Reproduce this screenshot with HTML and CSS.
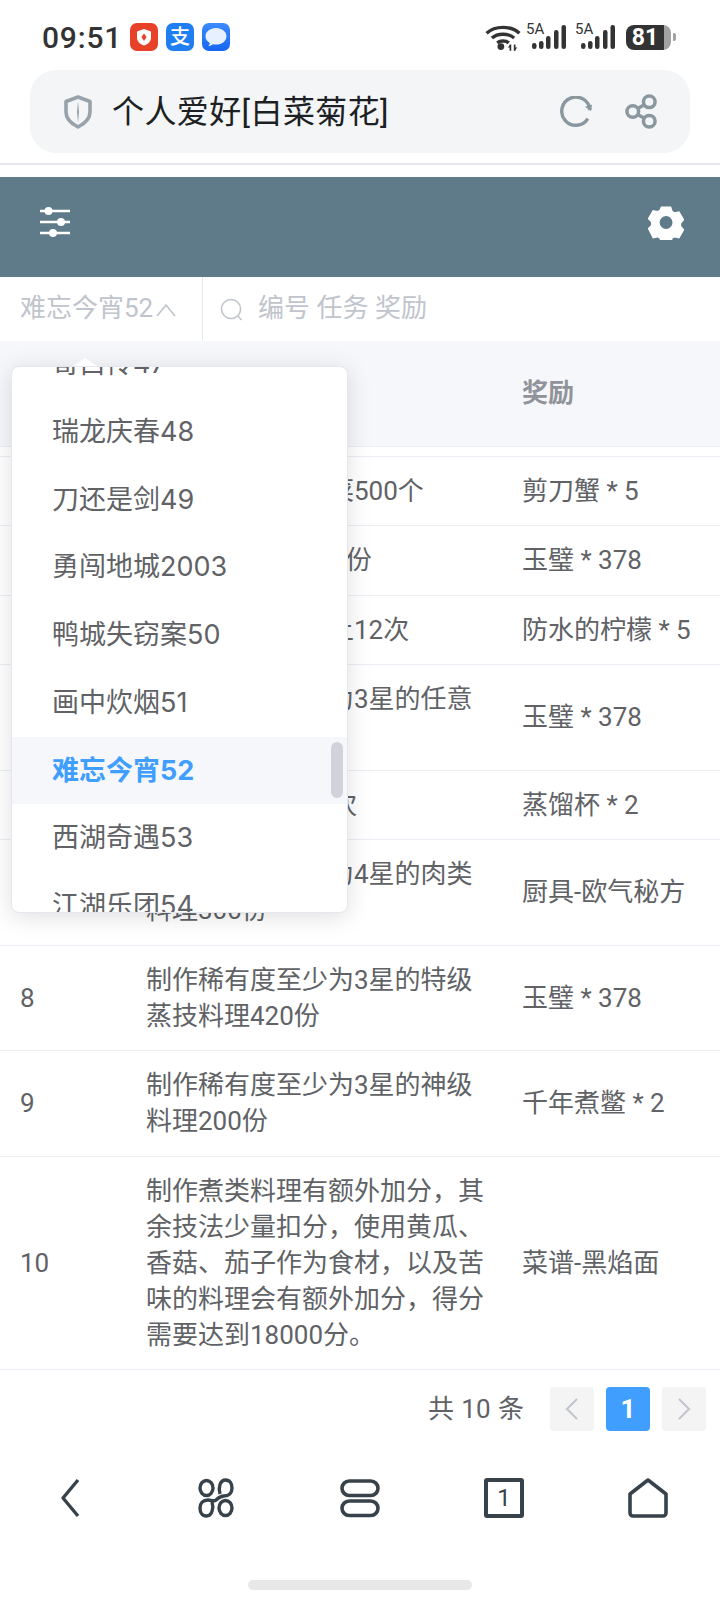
FILE: index.html
```html
<!DOCTYPE html>
<html lang="zh-CN">
<head>
<meta charset="utf-8">
<title>个人爱好[白菜菊花]</title>
<link rel="stylesheet" href="styles.css">
</head>
<body>
<div class="phone">
  <div class="status">
    <span class="time">09:51</span>
    <span class="app app-red">
      <svg viewBox="0 0 28 28" width="28" height="28"><path d="M14 6l7 2.400v6c0 4-3 6.600-7 8-4-1.400-7-4-7-8v-6z" fill="#fff"/><path d="M14 10.500l2.600 3.600-2.600 3.900-2.600-3.900z" fill="#e8412a"/></svg>
    </span>
    <span class="app app-blue">支</span>
    <span class="app app-msg">
      <svg viewBox="0 0 28 28" width="28" height="28"><path d="M14 5c6 0 10.500 3.700 10.500 8.300S20 21.600 14 21.600c-1 0-2-.1-3-.3-1.400 1.100-3 1.700-4.700 1.800 1-1 1.500-2.100 1.500-3.200-3-1.500-4.300-3.900-4.300-6.600C3.500 8.700 8 5 14 5z" fill="#e6f0ff"/></svg>
    </span>
    <span class="status-right">
      <svg class="wifi" viewBox="0 0 34 26" width="36" height="28"><g fill="none" stroke="#333" stroke-width="3.200"><path d="M1.500 9.500C9.500 2 24.500 2 32.500 9.500"/><path d="M6.500 14c5.500-4.800 15.500-4.800 21 0"/><path d="M11.500 18.500c3-2.300 8-2.300 11 0"/></g><circle cx="15" cy="22" r="3.200" fill="#333"/><path d="M24 20v6M28 20v6" stroke="#333" stroke-width="1.600"/><path d="M24 20l-2.500 3h2.500zM28 26l2.500-3H28z" fill="#333"/></svg>
      <span class="sig"><span class="sig-label">5A</span>
        <svg viewBox="0 0 40 26" width="40" height="26"><g fill="#333"><rect x="6" y="19" width="4.500" height="6" rx="2.200"/><rect x="13" y="17" width="4.500" height="8" rx="2.200"/><rect x="20" y="12" width="4.500" height="13" rx="2.200"/><rect x="28" y="6" width="4.500" height="19" rx="2.200"/><rect x="35.500" y="1" width="4.500" height="24" rx="2.200"/></g></svg>
      </span>
      <span class="sig"><span class="sig-label">5A</span>
        <svg viewBox="0 0 40 26" width="40" height="26"><g fill="#333"><rect x="6" y="19" width="4.500" height="6" rx="2.200"/><rect x="13" y="17" width="4.500" height="8" rx="2.200"/><rect x="20" y="12" width="4.500" height="13" rx="2.200"/><rect x="28" y="6" width="4.500" height="19" rx="2.200"/><rect x="35.500" y="1" width="4.500" height="24" rx="2.200"/></g></svg>
      </span>
      <span class="battery"><span class="battery-level">81</span></span><span class="battery-nub"></span>
    </span>
  </div>

  <div class="urlbar">
    <svg class="url-shield" viewBox="0 0 30 34" width="30" height="34"><path d="M15 2l12 4.500v10.500c0 7-5 11.500-12 15C8 28.500 3 24 3 17V6.500z" fill="none" stroke="#98a2aa" stroke-width="3.600" stroke-linejoin="round"/><path d="M15 6l1 11-1 11-1-11z" fill="#98a2aa"/></svg>
    <span class="url-title">个人爱好[白菜菊花]</span>
    <svg class="url-reload" viewBox="0 0 34 34" width="32" height="32"><path d="M29.600 24A15 15 0 1 1 31.800 15" fill="none" stroke="#8a979f" stroke-width="3.600"/><path d="M26.500 11.500l6.500 4.500 1-7z" fill="#8a979f"/></svg>
    <svg class="url-share" viewBox="0 0 34 36" width="33" height="35"><g fill="none" stroke="#8a979f" stroke-width="3.600"><circle cx="25" cy="8" r="6"/><circle cx="8" cy="18" r="6"/><circle cx="25" cy="28" r="6"/><path d="M13 15l7-4M13 21l7 4"/></g></svg>
  </div>
  <div class="url-sep"></div>

  <header class="topbar">
    <svg viewBox="0 0 32 34" width="32" height="34"><g stroke="#fff" stroke-width="2.400"><path d="M1 6h30M1 17h30M1 28h30"/></g><g fill="#fff"><circle cx="9.500" cy="6" r="4"/><circle cx="22" cy="17" r="4"/><circle cx="14" cy="28" r="4"/></g></svg>
    <svg viewBox="0 0 36 36" width="36" height="36"><path fill="#fff" fill-rule="evenodd" d="M12.500 1h11l1.600 5 2.200 1.300 5.100-1.100 5.500 9.500-3.500 3.900v2.800l3.500 3.900-5.500 9.500-5.100-1.100-2.200 1.300-1.600 5h-11l-1.600-5-2.200-1.300-5.100 1.100L-1.900 25l3.500-3.900v-2.800L-1.900 14.400 3.600 4.900l5.100 1.100 2.200-1.300zM18 11.500a7 7 0 1 0 0 14 7 7 0 0 0 0-14z" transform="translate(1.500 1.500) scale(.92)"/></svg>
  </header>

  <div class="filters">
    <div class="select">
      <span class="filter-text">难忘今宵52</span>
      <svg viewBox="0 0 20 14" width="20" height="14"><path d="M1 13l9-11 9 11" fill="none" stroke="#c0c4cc" stroke-width="1.600"/></svg>
    </div>
    <div class="search">
      <svg viewBox="0 0 24 24" width="23" height="23"><circle cx="11.500" cy="11.500" r="10" fill="none" stroke="#c0c4cc" stroke-width="1.600"/><path d="M18.500 18.500l4 4.500" stroke="#c0c4cc" stroke-width="1.600"/></svg>
      <span class="filter-text">编号 任务 奖励</span>
    </div>
  </div>

  <div class="table-area">
    <table class="table table-head">
      <colgroup><col class="col-id"><col class="col-task"><col class="col-reward"></colgroup>
      <thead><tr><th>编号</th><th>任务</th><th>奖励</th></tr></thead>
    </table>
    <table class="table table-body">
      <colgroup><col class="col-id"><col class="col-task"><col class="col-reward"></colgroup>
      <tbody>
        <tr><td>1</td><td>采集任意种类蔬菜500个</td><td>剪刀蟹 * 5</td></tr>
        <tr><td>2</td><td>制作任意料理300份</td><td>玉璧 * 378</td></tr>
        <tr><td>3</td><td>完成任意任务以上12次</td><td>防水的柠檬 * 5</td></tr>
        <tr><td>4</td><td>制作稀有度至少为3星的任意料理300份</td><td>玉璧 * 378</td></tr>
        <tr><td>5</td><td>完成任意任务20次</td><td>蒸馏杯 * 2</td></tr>
        <tr><td>6</td><td>制作稀有度至少为4星的肉类料理300份</td><td>厨具-欧气秘方</td></tr>
        <tr><td>8</td><td>制作稀有度至少为3星的特级蒸技料理420份</td><td>玉璧 * 378</td></tr>
        <tr><td>9</td><td>制作稀有度至少为3星的神级料理200份</td><td>千年煮鳖 * 2</td></tr>
        <tr><td>10</td><td>制作煮类料理有额外加分，其余技法少量扣分，使用黄瓜、香菇、茄子作为食材，以及苦味的料理会有额外加分，得分需要达到18000分。</td><td>菜谱-黑焰面</td></tr>
      </tbody>
    </table>

    <div class="dropdown">
      <ul class="dropdown-list">
        <li>哥白传47</li>
        <li>瑞龙庆春48</li>
        <li>刀还是剑49</li>
        <li>勇闯地城2003</li>
        <li>鸭城失窃案50</li>
        <li>画中炊烟51</li>
        <li class="selected">难忘今宵52</li>
        <li>西湖奇遇53</li>
        <li>江湖乐团54</li>
      </ul>
      <span class="dropdown-thumb"></span>
    </div>
  </div>

  <div class="pager">
    <span class="pager-total">共 10 条</span>
    <span class="pager-btn"><svg viewBox="0 0 14 24" width="14" height="24"><path d="M12 2L2 12l10 10" fill="none" stroke="#c0c4cc" stroke-width="2"/></svg></span>
    <span class="pager-btn active">1</span>
    <span class="pager-btn"><svg viewBox="0 0 14 24" width="14" height="24"><path d="M2 2l10 10L2 22" fill="none" stroke="#c0c4cc" stroke-width="2"/></svg></span>
  </div>

  <nav class="navbar">
    <svg viewBox="0 0 40 40" width="40" height="40"><path d="M26 2L11 20l15 18" fill="none" stroke="#37424a" stroke-width="3.400" stroke-linejoin="round"/></svg>
    <svg viewBox="0 0 40 40" width="40" height="40"><g fill="none" stroke="#37424a" stroke-width="3.400"><ellipse cx="10.500" cy="10" rx="6.500" ry="7.500"/><ellipse cx="29.500" cy="30" rx="6.500" ry="7.500"/><path d="M24 16c-2-6 0-14 5.500-14C34 2 36 6 36 10c0 5-3 8-8 8-3 0-6 2-8 4-2 2-4 0-8 0-5 0-8 3-8 8 0 4 2 8 6.500 8 5.500 0 7.500-8 5.500-14"/></g></svg>
    <svg viewBox="0 0 40 40" width="40" height="40"><g fill="none" stroke="#37424a" stroke-width="3.600"><rect x="2" y="3" width="36" height="14.500" rx="7.200"/><rect x="2" y="23" width="36" height="14.500" rx="7.200"/></g></svg>
    <span class="nav-tabs">1</span>
    <svg viewBox="0 0 40 40" width="40" height="40"><path d="M20 2L38 16v19a3 3 0 0 1-3 3H5a3 3 0 0 1-3-3V16z" fill="none" stroke="#37424a" stroke-width="3.600" stroke-linejoin="round"/></svg>
  </nav>
  <div class="gesture"></div>
</div>
</body>
</html>
```
FILE: styles.css
```css
* { box-sizing: border-box; }
html, body { margin: 0; padding: 0; background: #fff; }
body { font-family: Roboto, "Noto Sans CJK SC", sans-serif; }
.phone { width: 720px; height: 1602px; overflow: hidden; position: relative; background: #fff; }

.status { height: 70px; display: flex; align-items: center; padding: 4px 44px 0 42px; }
.time { font-size: 30px; font-weight: 500; color: #333; letter-spacing: .8px; width: 88px; }
.app { width: 28px; height: 28px; border-radius: 7px; margin-right: 8px; display: flex; align-items: center; justify-content: center; }
.app-red { background: #e8412a; }
.app-blue { background: #1e7ef2; color: #fff; font-size: 20px; font-weight: 500; line-height: 28px; }
.app-msg { background: linear-gradient(#3d8bff, #1565f0); }
.status-right { margin-left: auto; display: flex; align-items: center; }
.wifi { margin-right: 5px; }
.sig { position: relative; width: 40px; height: 26px; margin-right: 9px; }
.sig svg { display: block; }
.sig:nth-child(3) { margin-right: 11px; }
.sig-label { position: absolute; left: 0; top: -3px; font-size: 15px; font-family: Roboto, sans-serif; line-height: 16px; color: #333; }
.battery { width: 45px; height: 25px; border-radius: 8px; background: linear-gradient(90deg, #333 84%, #a3a3a3 84%); display: block; }
.battery-level { display: block; width: 38px; text-align: center; color: #fff; font-size: 23px; font-weight: 700; line-height: 25px; }
.battery-nub { width: 3px; height: 8px; margin-left: 2px; background: #a3a3a3; border-radius: 0 2px 2px 0; }

.urlbar { margin: 0 30px; height: 83px; border-radius: 26px; background: #f3f5f7; display: flex; align-items: center; padding: 0 32px 0 33px; }
.url-shield { margin-right: 19px; }
.url-title { font-size: 32px; color: #1c1f23; line-height: 40px; letter-spacing: .4px; }
.url-reload { margin-left: auto; margin-right: 33px; }
.url-sep { height: 2px; margin-top: 10px; background: #ebe7ee; }

.topbar { margin-top: 12px; height: 100px; background: #5f7b89; display: flex; align-items: center; justify-content: space-between; padding: 0 36px 11px 39px; }

.filters { height: 64px; display: flex; background: #fff; }
.filter-text { padding-bottom: 7px; }
.select { width: 203px; padding-left: 20px; display: flex; align-items: center; gap: 3px; color: #c0c4cc; font-size: 26px; border-right: 1px solid #e4e7ed; }
.select svg { margin-top: 2px; }
.search { display: flex; align-items: center; gap: 15px; padding-left: 17px; color: #c0c4cc; font-size: 26px; }

.table-area { position: relative; }
.table { width: 720px; border-collapse: collapse; table-layout: fixed; font-size: 26px; line-height: 36px; color: #606266; }
.col-id { width: 126px; }
.col-task { width: 378px; }
.col-reward { width: 216px; }
.table th { height: 105px; text-align: left; padding: 0 19px 0 20px; background: #f5f7fa; color: #909399; font-weight: 700; border-bottom: 1px solid #ebeef5; }
.table th:last-child { padding-left: 18px; }
.table-body { margin-top: 9px; border-top: 1px solid #ebeef5; }
.table td { padding: 16.250px 20px 16.250px 20px; border-bottom: 1px solid #ebeef5; vertical-align: middle; }
.table td:last-child { padding: 16.250px 0 16.250px 18px; }

.dropdown { position: absolute; left: 11px; top: 25px; width: 337px; height: 547px; background: #fff; border: 1px solid #e4e7ed; border-radius: 8px; box-shadow: 0 4px 24px rgba(0,0,0,.13); }
.dropdown::before { content: ""; position: absolute; left: 61px; top: -9px; border: 12px solid transparent; border-top: 0; border-bottom: 8px solid #fff; }
.dropdown-list { list-style: none; margin: 0; padding: 0; height: 545px; overflow: hidden; border-radius: 8px; }
.dropdown-list li { height: 67.750px; line-height: 67.750px; padding-left: 40px; font-family: Inter, "Noto Sans CJK SC", sans-serif; font-size: 27px; color: #606266; white-space: nowrap; }
.dropdown-list li:first-child { margin-top: -37px; }
.dropdown-list li.selected { color: #409eff; font-weight: 700; background: #f5f7fa; }
.dropdown-thumb { position: absolute; left: 319px; top: 375px; width: 12px; height: 56px; border-radius: 6px; background: #d0d3d9; }

.pager { display: flex; justify-content: flex-end; align-items: center; height: 44px; margin-top: 17px; padding-right: 14px; gap: 12px; }
.pager-total { font-size: 26px; color: #606266; margin-right: 14px; padding-bottom: 5px; word-spacing: 1px; }
.pager-btn { width: 44px; height: 44px; border-radius: 4px; background: #f4f4f5; display: flex; align-items: center; justify-content: center; font-size: 26px; font-weight: 700; }
.pager-btn.active { background: #409eff; color: #fff; }

.navbar { margin-top: 47px; height: 40px; display: grid; grid-template-columns: repeat(5, 144px); justify-items: center; align-items: center; }
.nav-tabs { width: 40px; height: 40px; border: 4px solid #37424a; border-radius: 3px; display: flex; align-items: center; justify-content: center; color: #37424a; font-size: 24px; font-weight: 400; }
.gesture { width: 224px; height: 10px; margin: 62px auto 0; border-radius: 5px; background: #e8e8e8; }
```
